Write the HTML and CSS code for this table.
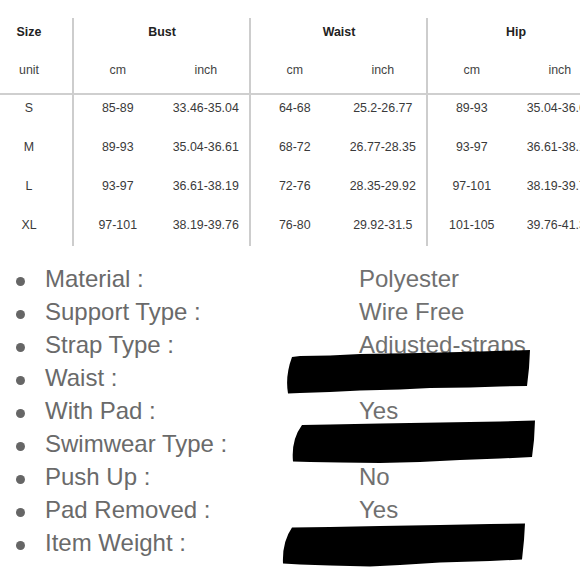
FILE: index.html
```html
<!DOCTYPE html>
<html>
<head>
<meta charset="utf-8">
<link rel="stylesheet" href="styles.css">
</head>
<body>
<div class="page">
  <div class="size-table">
    <div class="cell hd first">Size</div>
    <div class="cell hd sec span2">Bust</div>
    <div class="cell hd sec span2">Waist</div>
    <div class="cell hd sec span2">Hip</div>

    <div class="cell unit first">unit</div>
    <div class="cell unit sec">cm</div>
    <div class="cell unit">inch</div>
    <div class="cell unit sec">cm</div>
    <div class="cell unit">inch</div>
    <div class="cell unit sec">cm</div>
    <div class="cell unit">inch</div>

    <div class="cell data first">S</div>
    <div class="cell data sec">85-89</div>
    <div class="cell data">33.46-35.04</div>
    <div class="cell data sec">64-68</div>
    <div class="cell data">25.2-26.77</div>
    <div class="cell data sec">89-93</div>
    <div class="cell data">35.04-36.61</div>

    <div class="cell data first">M</div>
    <div class="cell data sec">89-93</div>
    <div class="cell data">35.04-36.61</div>
    <div class="cell data sec">68-72</div>
    <div class="cell data">26.77-28.35</div>
    <div class="cell data sec">93-97</div>
    <div class="cell data">36.61-38.19</div>

    <div class="cell data first">L</div>
    <div class="cell data sec">93-97</div>
    <div class="cell data">36.61-38.19</div>
    <div class="cell data sec">72-76</div>
    <div class="cell data">28.35-29.92</div>
    <div class="cell data sec">97-101</div>
    <div class="cell data">38.19-39.76</div>

    <div class="cell data first">XL</div>
    <div class="cell data sec">97-101</div>
    <div class="cell data">38.19-39.76</div>
    <div class="cell data sec">76-80</div>
    <div class="cell data">29.92-31.5</div>
    <div class="cell data sec">101-105</div>
    <div class="cell data">39.76-41.34</div>
  </div>

  <ul class="specs">
    <li class="spec"><span class="label">Material :</span><span class="value">Polyester</span></li>
    <li class="spec"><span class="label">Support Type :</span><span class="value">Wire Free</span></li>
    <li class="spec"><span class="label">Strap Type :</span><span class="value">Adjusted-straps</span></li>
    <li class="spec"><span class="label">Waist :</span><span class="value"></span></li>
    <li class="spec"><span class="label">With Pad :</span><span class="value">Yes</span></li>
    <li class="spec"><span class="label">Swimwear Type :</span><span class="value"></span></li>
    <li class="spec"><span class="label">Push Up :</span><span class="value">No</span></li>
    <li class="spec"><span class="label">Pad Removed :</span><span class="value">Yes</span></li>
    <li class="spec"><span class="label">Item Weight :</span><span class="value"></span></li>
  </ul>

  <svg class="redactions" width="580" height="580" viewBox="0 0 580 580" aria-hidden="true">
    <path d="M292,357 L300,356 L330,355.5 L360,354 L420,353 L480,351.5 L530,350 L529,368 L527,386 L500,386.5 L470,387.5 L430,388 L400,389.5 L360,390.5 L330,392 L300,393 L288,393.5 Q285,376 292,357 Z" fill="#000"/>
    <path d="M302,425 L330,424.5 L380,423.5 L440,422.5 L500,421.5 L535,420.5 L534,440 L532,457 L500,458.5 L460,460 L420,462 L380,463 L340,462.5 L310,462 L293,461.5 Q291,440 302,425 Z" fill="#000"/>
    <path d="M292,527.5 L330,527 L380,526 L440,525 L490,524 L525,523.5 L524,540 L522,559.5 L490,561 L440,562.5 L400,565 L370,566.5 L330,565.5 L300,564.5 L283,563.5 Q282,542 292,527.5 Z" fill="#000"/>
  </svg>
</div>
</body>
</html>
```

FILE: styles.css
```css
html, body {
  margin: 0;
  padding: 0;
  background: #fff;
}

body {
  width: 580px;
  height: 580px;
  overflow: hidden;
}

.page {
  position: relative;
  width: 580px;
  height: 580px;
  overflow: hidden;
  font-family: "Liberation Sans", Arial, sans-serif;
}

.size-table {
  margin-top: 18px;
  width: 604px;
  display: grid;
  grid-template-columns: 73px repeat(6, 88.5px);
  grid-template-rows: 39px 38px 39px 39px 39px 34px;
  font-size: 12.4px;
  color: #3c3c3c;
}

.cell {
  box-sizing: border-box;
  text-align: center;
  white-space: nowrap;
  line-height: 26px;
}

.cell.first {
  padding-right: 15px;
}

.cell.sec {
  border-left: 2px solid #cdcdcd;
  margin-left: -1px;
}

.cell.span2 {
  grid-column: span 2;
}

.hd {
  font-weight: bold;
  color: #222;
  line-height: 28px;
}

.unit {
  padding-top: 0;
  border-bottom: 2px solid #cfcfcf;
  color: #444;
}

.data {
  color: #3a3a3a;
}

.specs {
  list-style: none;
  margin: 16px 0 0 0;
  padding: 0;
  font-size: 24px;
  line-height: 33px;
  color: #6a6a6a;
}

.spec {
  display: grid;
  grid-template-columns: 359px 1fr;
  position: relative;
  white-space: nowrap;
}

.spec::before {
  content: "";
  position: absolute;
  left: 16px;
  top: 15px;
  width: 9px;
  height: 9px;
  border-radius: 50%;
  background: #666;
}

.label {
  padding-left: 45px;
}

.value {
  color: #707070;
}

.redactions {
  position: absolute;
  left: 0;
  top: 0;
  pointer-events: none;
}
```
